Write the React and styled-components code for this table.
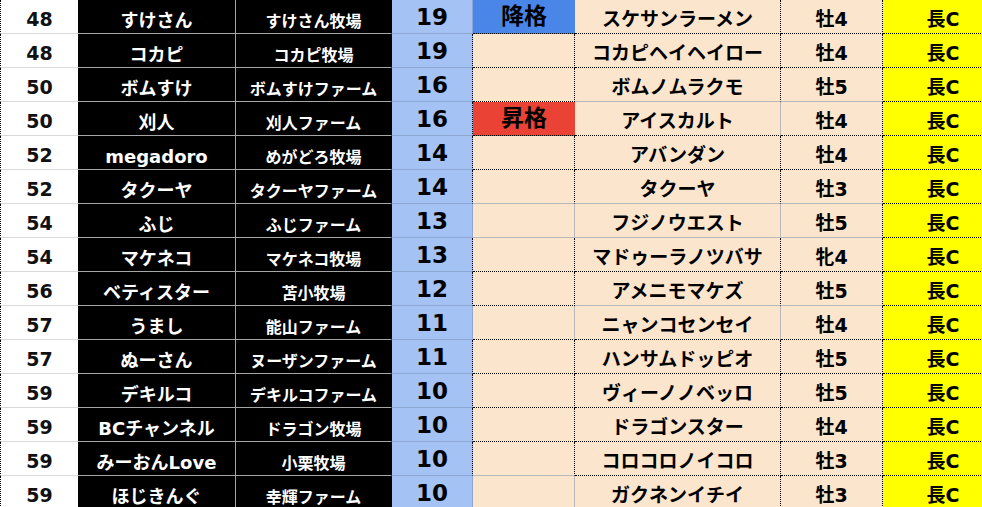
import React from "react";
import styled, { createGlobalStyle } from "styled-components";

const GlobalStyle = createGlobalStyle`
  html, body {
    margin: 0;
    padding: 0;
    background: #ffffff;
    overflow: hidden;
  }
`;

const DOT = "1px dotted #000";
const GRAY = "1px solid #b9b9b9";
const BLACKLINE = "1px solid #a6a6a6";
const BLUELINE = "1px solid #8ea7d2";

const Sheet = styled.div`
  width: 982px;
  height: 507px;
  overflow: hidden;
  font-family: "DejaVu Sans", "Noto Sans CJK JP", sans-serif;
  font-weight: 700;
`;

const Row = styled.div`
  display: grid;
  grid-template-columns: 78px 158px 156px 81px 102px 206px 102px 120px;
  height: 34px;
`;

const Cell = styled.div`
  box-sizing: border-box;
  height: 34px;
  overflow: hidden;
  white-space: nowrap;
  text-align: center;
  background: ${(p) => p.$bg || "transparent"};
  color: ${(p) => p.$color || "#000"};
  font-size: ${(p) => p.$size}px;
  line-height: 33px;
  padding-top: ${(p) => p.$pt || 0}px;
  border-left: ${(p) => p.$left || "none"};
  border-right: ${(p) => p.$right || "none"};
  border-bottom: ${(p) => p.$bottom || "none"};
`;

const Rank = styled(Cell)`
  background: #fff;
  color: #111;
  border-left: ${DOT};
  border-bottom: 1px solid #d9d9d9;
`;

const Owner = styled(Cell)`
  background: #000;
  color: #fff;
  border-right: ${(p) => p.$right || BLACKLINE};
  border-bottom: ${BLACKLINE};
`;

const Points = styled(Cell)`
  background: #a4c2f4;
  border-bottom: ${BLUELINE};
`;

const Status = styled(Cell)`
  background: ${(p) =>
    p.$kind === "down" ? "#4a86e8" : p.$kind === "up" ? "#ea4335" : "#fce5cd"};
`;

const Horse = styled(Cell)`
  background: #fce5cd;
`;

const Grade = styled(Cell)`
  background: #ffff00;
  border-bottom: ${DOT};
`;

// sd: status boxed with dots, sb: status bottom ("d" dotted / "g" gray)
// hr: horse right line, hb: horse + sex bottom line
const rows = [
  ["48", "すけさん", "すけさん牧場", "19", "down", "スケサンラーメン", "牡4", "n", "d", "d", "d"],
  ["48", "コカピ", "コカピ牧場", "19", "", "コカピヘイヘイロー", "牡4", "d", "d", "d", "d"],
  ["50", "ボムすけ", "ボムすけファーム", "16", "", "ボムノムラクモ", "牡5", "d", "d", "d", "g"],
  ["50", "刈人", "刈人ファーム", "16", "up", "アイスカルト", "牡4", "l", "d", "g", "d"],
  ["52", "megadoro", "めがどろ牧場", "14", "", "アバンダン", "牡4", "d", "d", "d", "d"],
  ["52", "タクーヤ", "タクーヤファーム", "14", "", "タクーヤ", "牡3", "d", "g", "d", "g"],
  ["54", "ふじ", "ふじファーム", "13", "", "フジノウエスト", "牡5", "g", "g", "g", "g"],
  ["54", "マケネコ", "マケネコ牧場", "13", "", "マドゥーラノツバサ", "牝4", "d", "d", "d", "d"],
  ["56", "ベティスター", "苫小牧場", "12", "", "アメニモマケズ", "牡5", "d", "d", "d", "g"],
  ["57", "うまし", "能山ファーム", "11", "", "ニャンコセンセイ", "牡4", "g", "d", "g", "d"],
  ["57", "ぬーさん", "ヌーザンファーム", "11", "", "ハンサムドッピオ", "牡5", "d", "d", "d", "d"],
  ["59", "デキルコ", "デキルコファーム", "10", "", "ヴィーノノベッロ", "牡5", "d", "d", "d", "d"],
  ["59", "BCチャンネル", "ドラゴン牧場", "10", "", "ドラゴンスター", "牡4", "d", "d", "d", "d"],
  ["59", "みーおんLove", "小栗牧場", "10", "", "コロコロノイコロ", "牡3", "d", "g", "d", "d"],
  ["59", "ほじきんぐ", "幸輝ファーム", "10", "", "ガクネンイチイ", "牡3", "g", "g", "d", "d"],
];

const line = (k) => (k === "d" ? DOT : GRAY);

const App = () => {
  return (
    <>
      <GlobalStyle />
      <Sheet>
        {rows.map((r, i) => {
          const [rank, name, farm, pts, kind, horse, sex, sd, sb, hr, hb] = r;
          const boxed = sd === "d";
          const leftDot = boxed || sd === "l";
          const colored = kind !== "";
          return (
            <Row key={i}>
              <Rank $size={19} $pt={3}>{rank}</Rank>
              <Owner $size={18} $pt={4}>{name}</Owner>
              <Owner $size={16} $pt={5} $right="1px solid #000">
                {farm}
              </Owner>
              <Points $size={23} $pt={1} $right={leftDot ? DOT : BLUELINE}>
                {pts}
              </Points>
              <Status
                $kind={kind}
                $size={23}
                $pt={0}
                $right={colored ? "none" : boxed ? DOT : GRAY}
                $bottom={line(sb)}
              >
                {kind === "down" ? "降格" : kind === "up" ? "昇格" : ""}
              </Status>
              <Horse $size={19} $pt={3} $right={line(hr)} $bottom={line(hb)}>
                {horse}
              </Horse>
              <Horse $size={19} $pt={3} $right={DOT} $bottom={line(hb)}>
                {sex}
              </Horse>
              <Grade $size={19} $pt={3}>
                長C
              </Grade>
            </Row>
          );
        })}
      </Sheet>
    </>
  );
};

export default App;
